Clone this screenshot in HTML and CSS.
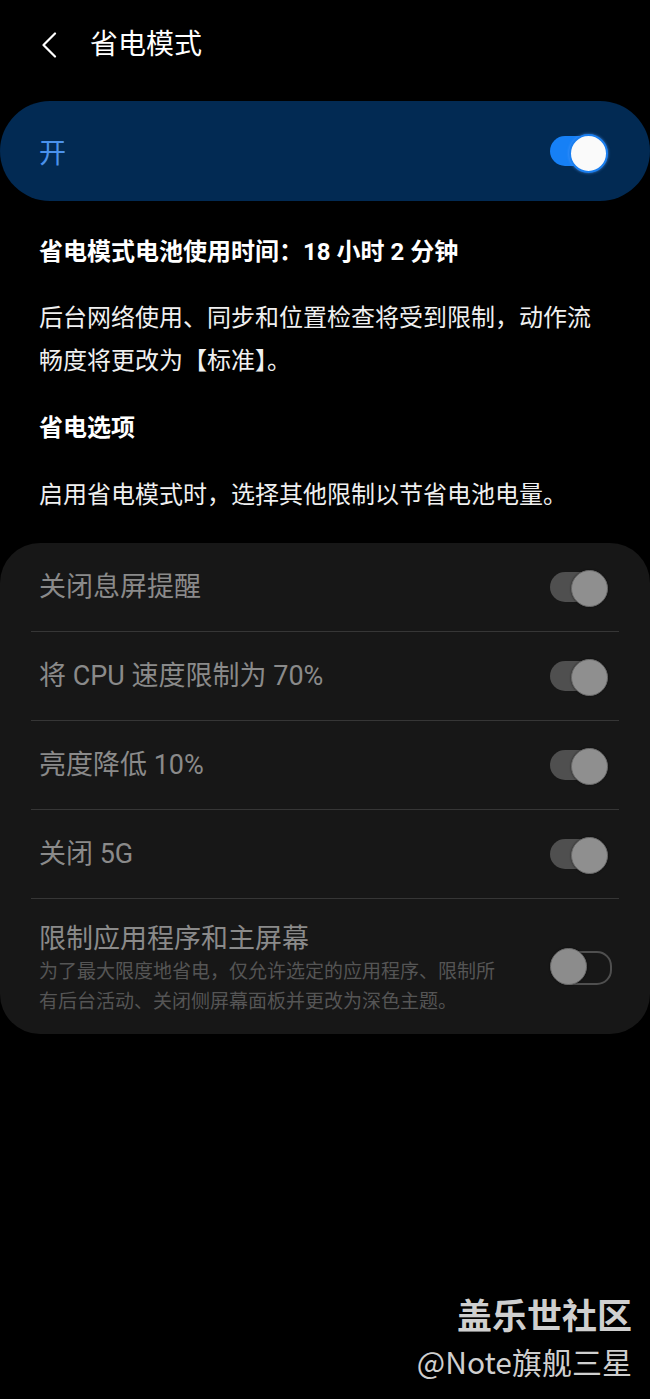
FILE: index.html
```html
<!DOCTYPE html>
<html lang="zh-CN">
<head>
    <meta charset="UTF-8">
    <meta name="viewport" content="width=device-width, initial-scale=1.0">
    <title>省电模式</title>
    <link rel="stylesheet" href="styles.css">
</head>
<body>

    <div class="screen">
        <!-- Top bar -->
        <header class="app-bar">
            <svg class="back-icon" width="16" height="26" viewBox="0 0 16 26">
                <polyline points="14,1.5 2.5,13 14,24.5" fill="none" stroke="#ffffff" stroke-width="2.2" stroke-linecap="round" stroke-linejoin="round"/>
            </svg>
            <h1 class="app-title">省电模式</h1>
        </header>

        <!-- Master switch -->
        <div class="master-card">
            <span class="master-label">开</span>
            <span class="switch switch-blue"></span>
        </div>

        <div class="info">
            <p class="summary">省电模式电池使用时间：18 小时 2 分钟</p>
            <p class="desc">后台网络使用、同步和位置检查将受到限制，动作流畅度将更改为【标准】。</p>
            <p class="section-title">省电选项</p>
            <p class="hint">启用省电模式时，选择其他限制以节省电池电量。</p>
        </div>

        <!-- Options list -->
        <div class="options-card">
            <div class="option-row">
                <span class="option-title">关闭息屏提醒</span>
                <span class="switch switch-gray"></span>
            </div>
            <div class="option-row">
                <span class="option-title">将 CPU 速度限制为 70%</span>
                <span class="switch switch-gray"></span>
            </div>
            <div class="option-row">
                <span class="option-title">亮度降低 10%</span>
                <span class="switch switch-gray"></span>
            </div>
            <div class="option-row">
                <span class="option-title">关闭 5G</span>
                <span class="switch switch-gray"></span>
            </div>
            <div class="option-row option-tall">
                <div class="option-text">
                    <div class="option-title">限制应用程序和主屏幕</div>
                    <div class="option-sub">为了最大限度地省电，仅允许选定的应用程序、限制所有后台活动、关闭侧屏幕面板并更改为深色主题。</div>
                </div>
                <span class="switch switch-off"></span>
            </div>
        </div>

        <!-- Watermark -->
        <div class="watermark">
            <div class="wm-main">盖乐世社区</div>
            <div class="wm-sub">@Note旗舰三星</div>
        </div>
    </div>

</body>
</html>
```

FILE: styles.css
```css
* {
    margin: 0;
    padding: 0;
    box-sizing: border-box;
}

html, body {
    background-color: #000;
    min-height: 100vh;
}

body {
    font-family: Roboto, "Noto Sans CJK SC", sans-serif;
    color: #fff;
}

.screen {
    position: relative;
    width: 650px;
    height: 1399px;
    overflow: hidden;
}

/* Top bar */
.app-bar {
    height: 90px;
    display: flex;
    align-items: center;
    padding-left: 41px;
    gap: 33px;
}

.app-title {
    font-size: 28px;
    font-weight: 400;
    line-height: 36px;
}

/* Master switch card */
.master-card {
    margin-top: 11px;
    height: 100px;
    border-radius: 50px;
    background-color: #022a53;
    display: flex;
    align-items: center;
    justify-content: space-between;
    padding: 0 42px 0 39px;
}

.master-label {
    font-size: 27px;
    color: #4b92ec;
}

/* Info texts */
.info {
    padding: 0 39px;
}

.summary {
    margin-top: 34px;
    font-size: 24px;
    font-weight: 700;
    line-height: 34px;
}

.desc {
    margin-top: 28px;
    font-size: 24px;
    line-height: 43px;
    color: #f0f0f0;
}

.section-title {
    margin-top: 28px;
    font-size: 24px;
    font-weight: 700;
    line-height: 34px;
}

.hint {
    margin-top: 33px;
    font-size: 24px;
    line-height: 34px;
    color: #f0f0f0;
}

/* Options card */
.options-card {
    margin-top: 31px;
    background-color: #171717;
    border-radius: 40px;
    padding: 0 31px;
}

.option-row {
    height: 88px;
    display: flex;
    align-items: center;
    justify-content: space-between;
    padding: 0 11px 0 8px;
}

.option-row + .option-row {
    height: 89px;
    border-top: 1px solid #363636;
}

.option-row.option-tall {
    height: 136px;
    padding-top: 22px;
    padding-bottom: 17px;
}

.option-tall .switch {
    margin-bottom: 7px;
}

.option-title {
    font-size: 27px;
    line-height: 36px;
    color: #8a8a8a;
}

.option-text {
    max-width: 464px;
}

.option-sub {
    font-size: 19px;
    line-height: 30px;
    color: #555;
}

/* Toggle switches */
.switch {
    position: relative;
    flex-shrink: 0;
    width: 58px;
    height: 35px;
}

.switch::before {
    content: "";
    position: absolute;
    left: 0;
    top: 2.5px;
    width: 56px;
    height: 30px;
    border-radius: 15px;
}

.switch::after {
    content: "";
    position: absolute;
    right: 0;
    top: 0;
    width: 35px;
    height: 35px;
    border-radius: 50%;
}

.switch-blue::before {
    background-color: #1680f6;
}

.switch-blue::after {
    background-color: #fafafa;
    border: 2px solid #1a7ff0;
    box-shadow: 0 0 3px rgba(90, 160, 255, 0.7);
}

.switch-gray::before {
    background-color: #4f4f4f;
}

.switch-gray::after {
    background-color: #8f8f8f;
    border: 1.5px solid #6a6a6a;
    box-shadow: 0 0 2px rgba(0, 0, 0, 0.6);
}

.switch-off::before {
    left: 3px;
    width: 55px;
    border: 2px solid #4f4f4f;
}

.switch-off::after {
    right: auto;
    left: 0;
    background-color: #8c8c8c;
    border: 1.5px solid #6a6a6a;
    box-shadow: 0 0 2px rgba(0, 0, 0, 0.6);
}

/* Watermark over the page */
.watermark {
    position: absolute;
    right: 18px;
    top: 1292px;
    text-align: right;
    font-family: "Noto Sans CJK SC", sans-serif;
    color: #cfcfcf;
}

.wm-main {
    font-size: 35px;
    font-weight: 700;
    line-height: 44px;
}

.wm-sub {
    font-size: 30px;
    line-height: 50px;
}
```
